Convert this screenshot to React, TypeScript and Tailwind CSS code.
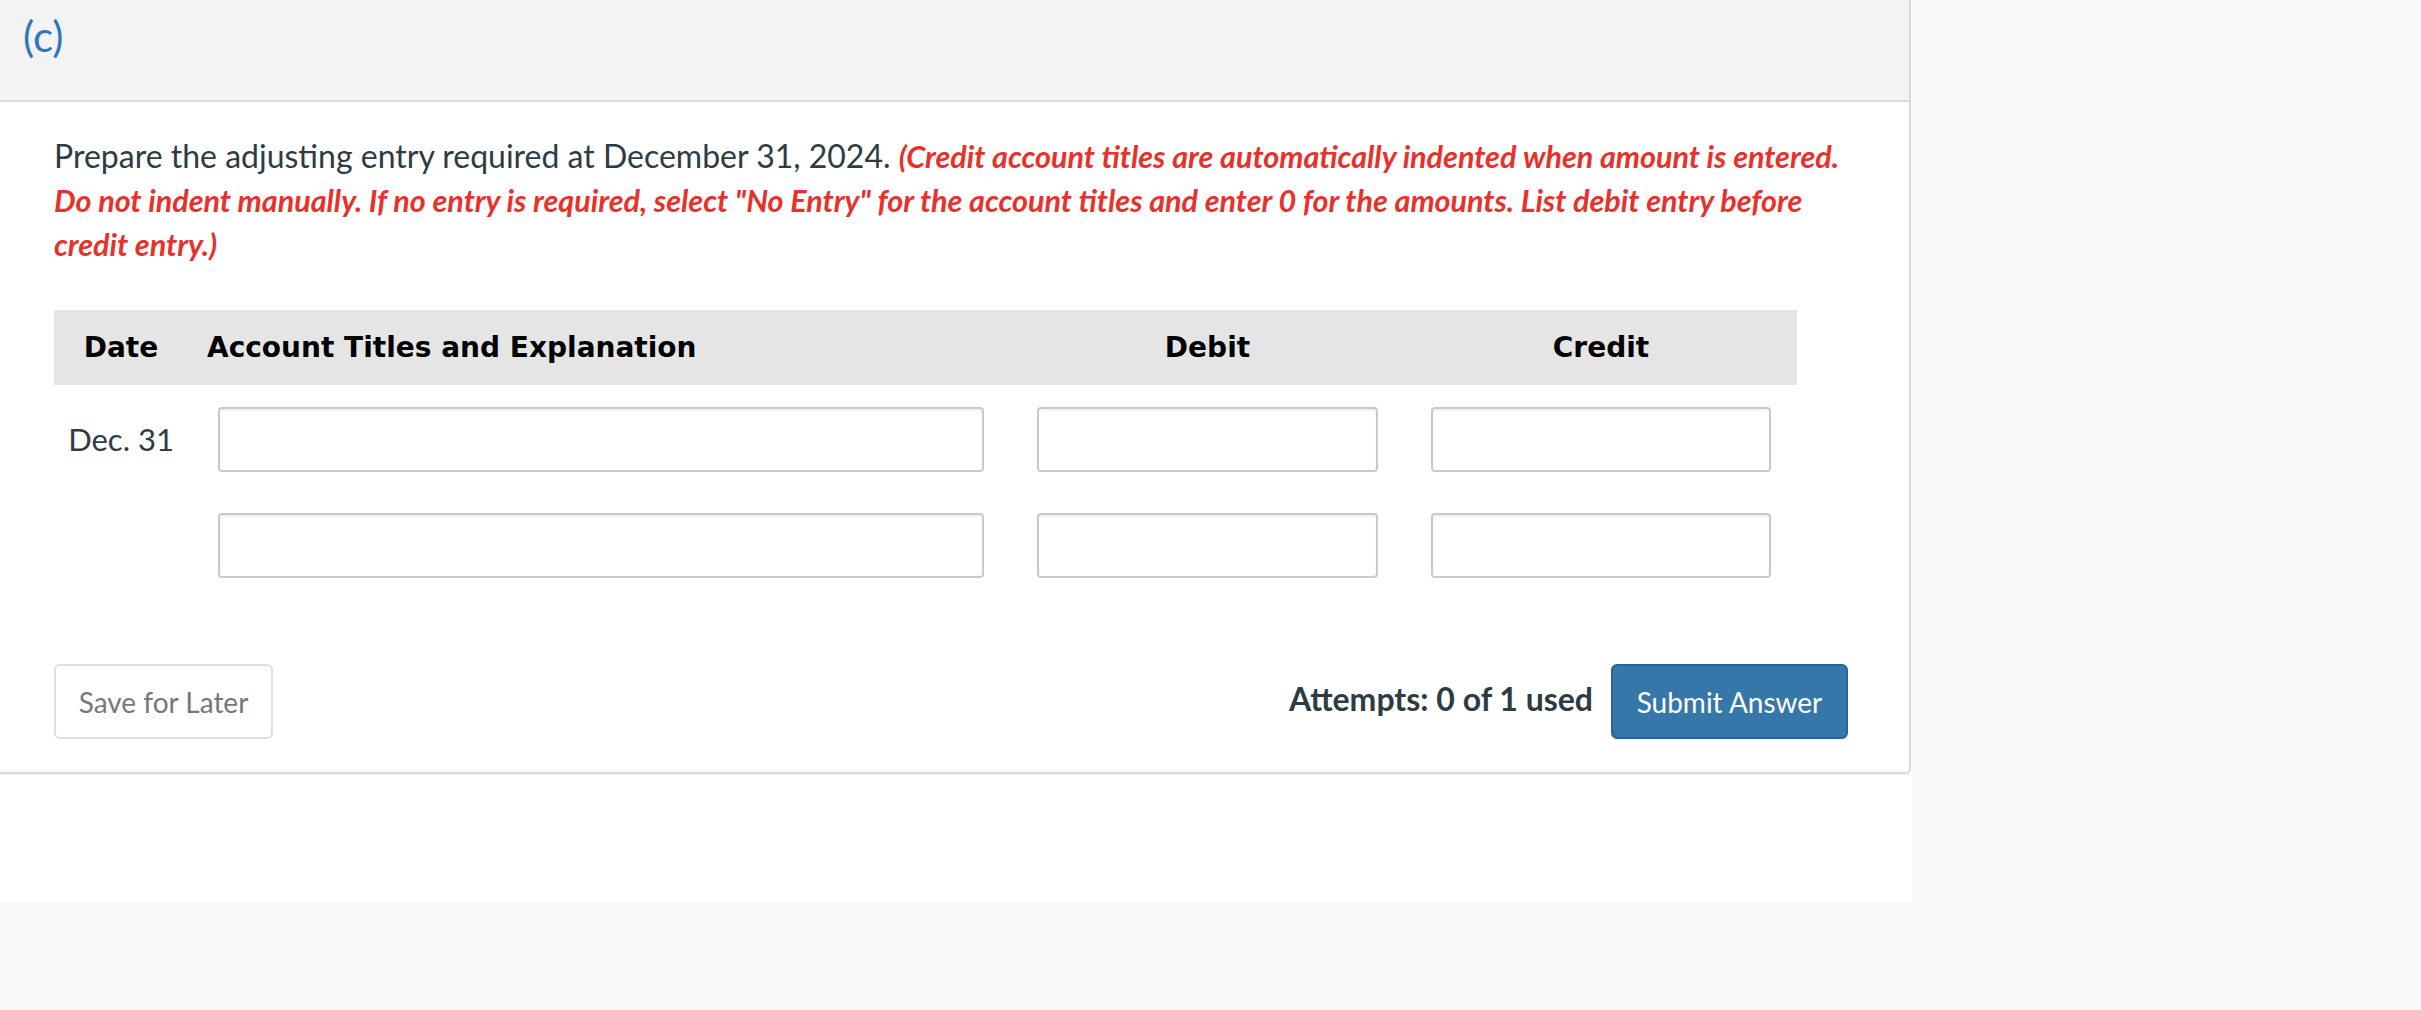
import React from "react";

const lato = { fontFamily: "Lato, 'Open Sans', sans-serif" } as const;
const dejavu = { fontFamily: "'DejaVu Sans', Verdana, sans-serif" } as const;

function Field({ w }: { w: string }) {
  return (
    <div
      className={`${w} h-[65px] bg-white border-2 border-[#cacaca] rounded-[4px] shadow-[inset_0_2px_2px_rgba(0,0,0,0.06)]`}
    />
  );
}

export default function App() {
  return (
    <div className="min-h-[1010px] w-full bg-[#f9f9f9]" style={lato}>
      <div className="w-[1912px] bg-white pb-[128px]">
        <div className="w-[1911px] border-r-2 border-b-2 border-[#d9d9d9] rounded-br-[6px] shadow-[0_1px_2px_rgba(0,0,0,0.06)]">
          <div className="h-[102px] bg-[#f3f3f3] border-b-2 border-[#dcdcdc] pl-[23px] pt-[11px]">
            <span className="text-[42px] leading-[50px] text-[#2f78b7]">(c)</span>
          </div>
          <div className="px-[54px] pt-[32px] pb-[33px]">
            <p className="text-[32px] leading-[44px] text-[#2d3b45]">
              Prepare the adjusting entry required at December 31, 2024.{" "}
              <span className="text-[30.5px] leading-[44px] font-bold italic text-[#e8312a]">
                (Credit account titles are automatically indented when amount is entered. Do not indent manually. If no entry is required, select "No Entry" for the account titles and enter 0 for the amounts. List debit entry before credit entry.)
              </span>
            </p>

            <div className="mt-[44px] w-[1743px]">
              <div
                className="grid grid-cols-[134px_822px_395px_392px] h-[75px] items-center bg-[#e5e5e5] text-[28px] font-bold text-black"
                style={dejavu}
              >
                <div className="text-center">Date</div>
                <div className="pl-[19px]">Account Titles and Explanation</div>
                <div className="text-center">Debit</div>
                <div className="text-center">Credit</div>
              </div>

              {[0, 1].map((r) => (
                <div
                  key={r}
                  className="grid grid-cols-[134px_822px_395px_392px] h-[106px] pt-[22px]"
                >
                  <div className="h-[65px] flex items-center justify-center text-[31px] text-[#2d3b45]">
                    {r === 0 ? "Dec. 31" : ""}
                  </div>
                  <div className="pl-[30px]">
                    <Field w="w-[766px]" />
                  </div>
                  <div className="flex justify-center">
                    <Field w="w-[341px]" />
                  </div>
                  <div className="flex justify-center">
                    <Field w="w-[340px]" />
                  </div>
                </div>
              ))}
            </div>

            <div className="mt-[67px] w-[1794px] flex items-center justify-between">
              <button className="w-[219px] h-[75px] border-2 border-[#dedede] rounded-[6px] bg-white text-[28px] text-[#777777]">
                Save for Later
              </button>
              <div className="flex items-center">
                <span className="text-[32px] font-bold text-[#2d3b45] mr-[18px] mb-[6px]">
                  Attempts: 0 of 1 used
                </span>
                <button className="w-[237px] h-[75px] border-2 border-[#2b6392] rounded-[6px] bg-[#3577a9] text-[28px] text-white">
                  Submit Answer
                </button>
              </div>
            </div>
          </div>
        </div>
      </div>
    </div>
  );
}
